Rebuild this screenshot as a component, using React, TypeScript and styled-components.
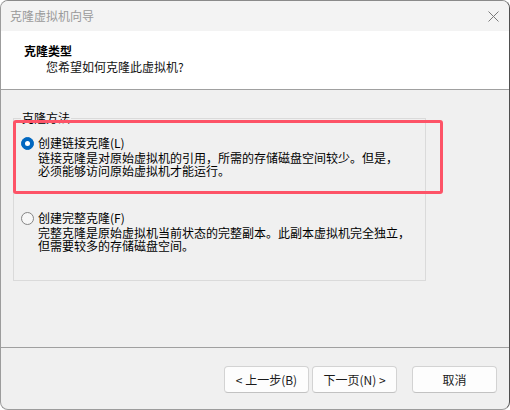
import React from "react";
import styled, { createGlobalStyle } from "styled-components";

const GlobalStyle = createGlobalStyle`
  html, body { margin: 0; padding: 0; background: #ffffff; }
  body { font-family: "Noto Sans CJK SC", "Noto Sans", sans-serif; }
  * { box-sizing: border-box; }
`;

const Window = styled.div`
  position: relative;
  width: 510px;
  height: 410px;
  display: flex;
  flex-direction: column;
  border: 1px solid #9c9c9c;
  border-right-color: #4f4f4f;
  border-top-color: #8a8a8a;
  border-radius: 8px;
  overflow: hidden;
  background: #f0f0f0;
  font-size: 12px;
  color: #000;
`;

const TitleBar = styled.div`
  height: 30px;
  flex: none;
  display: flex;
  align-items: center;
  justify-content: space-between;
  padding: 0 10px 0 9px;
  background: #f3f3f3;
`;

const TitleText = styled.span`
  color: #9a9a9a;
  font-size: 12px;
  line-height: 16px;
`;

const CloseButton = styled.span`
  display: flex;
  width: 12px;
  height: 12px;
  align-items: center;
  justify-content: center;
`;

const Header = styled.div`
  height: 59px;
  flex: none;
  background: #ffffff;
  border-bottom: 1px solid #a0a0a0;
  padding: 12px 0 0 23px;
`;

const HeaderTitle = styled.div`
  font-weight: 700;
  line-height: 16px;
  color: #000;
`;

const HeaderSub = styled.div`
  margin-left: 22px;
  line-height: 16px;
  color: #111;
`;

const Body = styled.div`
  flex: 1;
  padding: 20px 0 0 12px;
`;

const Group = styled.fieldset`
  margin: 0;
  width: 413px;
  height: 171px;
  padding: 9px 7px 0 7px;
  border: 1px solid #dadada;
  border-radius: 0;
`;

const Legend = styled.legend`
  padding: 0 1px;
  line-height: 16px;
  color: #000;
`;

const Option = styled.div<{ $gap?: number }>`
  margin-top: ${(p) => p.$gap ?? 0}px;
`;

const OptionRow = styled.div`
  display: flex;
  align-items: center;
  gap: 4px;
  line-height: 16px;
`;

const Radio = styled.span<{ $checked?: boolean }>`
  position: relative;
  width: 13px;
  height: 13px;
  flex: none;
  border-radius: 50%;
  background: ${(p) => (p.$checked ? "#0067c0" : "#f7f7f7")};
  border: 1px solid ${(p) => (p.$checked ? "#0067c0" : "#858585")};
  display: flex;
  align-items: center;
  justify-content: center;
  &::after {
    content: "";
    display: ${(p) => (p.$checked ? "block" : "none")};
    width: 5px;
    height: 5px;
    border-radius: 50%;
    background: #ffffff;
  }
`;

const Desc = styled.div`
  margin: 1px 0 0 17px;
  line-height: 12.6px;
  color: #000;
`;

const Highlight = styled.div`
  position: absolute;
  left: 12px;
  top: 119px;
  width: 430px;
  height: 74px;
  border: 3px solid #fd5367;
  border-radius: 3px;
  pointer-events: none;
`;

const Footer = styled.div`
  height: 62px;
  flex: none;
  border-top: 1px solid #a0a0a0;
  display: flex;
  justify-content: flex-end;
  align-items: flex-start;
  padding: 18px 12px 0 0;
`;

const Button = styled.button<{ $gapLeft?: number }>`
  width: 85px;
  height: 27px;
  margin-left: ${(p) => p.$gapLeft ?? 0}px;
  background: #fdfdfd;
  border: 1px solid #d3d3d3;
  border-bottom-color: #c2c2c2;
  border-radius: 4px;
  font-family: "Noto Sans CJK SC", "Noto Sans", sans-serif;
  font-size: 12px;
  color: #1a1a1a;
  padding: 0;
  line-height: 16px;
`;

export default function App() {
  return (
    <>
      <GlobalStyle />
      <Window>
        <TitleBar>
          <TitleText>克隆虚拟机向导</TitleText>
          <CloseButton>
            <svg width="11" height="11" viewBox="0 0 11 11">
              <path d="M0.5 0.5 L10.5 10.5 M10.5 0.5 L0.5 10.5" stroke="#7a7a7a" strokeWidth="1" fill="none" />
            </svg>
          </CloseButton>
        </TitleBar>
        <Header>
          <HeaderTitle>克隆类型</HeaderTitle>
          <HeaderSub>您希望如何克隆此虚拟机?</HeaderSub>
        </Header>
        <Body>
          <Group>
            <Legend>克隆方法</Legend>
            <Option>
              <OptionRow>
                <Radio $checked />
                <span>创建链接克隆(L)</span>
              </OptionRow>
              <Desc>
                链接克隆是对原始虚拟机的引用，所需的存储磁盘空间较少。但是，
                <br />
                必须能够访问原始虚拟机才能运行。
              </Desc>
            </Option>
            <Option $gap={33}>
              <OptionRow>
                <Radio />
                <span>创建完整克隆(F)</span>
              </OptionRow>
              <Desc>
                完整克隆是原始虚拟机当前状态的完整副本。此副本虚拟机完全独立，
                <br />
                但需要较多的存储磁盘空间。
              </Desc>
            </Option>
          </Group>
        </Body>
        <Footer>
          <Button>&lt; 上一步(B)</Button>
          <Button $gapLeft={3}>下一页(N) &gt;</Button>
          <Button $gapLeft={15}>取消</Button>
        </Footer>
        <Highlight />
      </Window>
    </>
  );
}
